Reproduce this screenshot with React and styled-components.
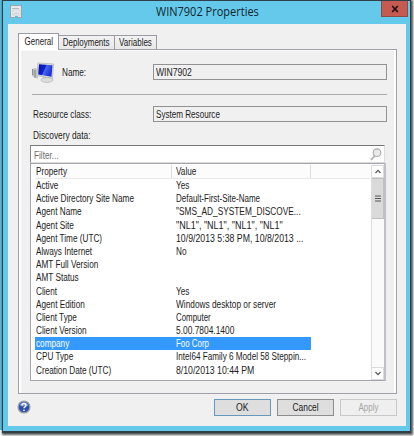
import React from 'react'
import styled, { createGlobalStyle, css } from 'styled-components'


const GlobalStyle = createGlobalStyle`
    * {
        box-sizing: border-box;
    }

    body {
        margin: 0;
        overflow: hidden;
        background: #fff;
        font-family: "Liberation Sans", Arial, sans-serif;
        font-size: 10px;
        color: #1c1c1c;
    }
`

// the dialog font is narrower than Arial
const Text = styled.span`
    display: inline-block;
    white-space: nowrap;
    transform: scaleX(${props => props.$narrow || 0.82});
    transform-origin: ${props => props.$center ? 'center' : 'left'};
`

const Desktop = styled.div`
    width: 414px;
    height: 436px;
    padding-left: 2px;
    background: linear-gradient(to right, #57bfe4 2px, #fff 2px) no-repeat 0 0 / 100% 430px;
`

const Window = styled.div`
    width: 409px;
    height: 433px;
    display: flex;
    flex-direction: column;
    padding: 0 4px 5px 5px;
    border: solid #2f3f48;
    border-width: 1px 1px 2px 1px;
    background: #64c9ea;
    box-shadow: 1px 1px 2px 1px #555;
`

const TitleBar = styled.div`
    height: 23px;
    display: flex;
    flex-shrink: 0;
`

const TitleIcon = styled.svg`
    width: 12px;
    height: 13px;
    margin: 4px 0 0 2px;
`

const Title = styled.div`
    flex: 1;
    padding-left: 134px;
    font-family: "Open Sans", "Noto Sans", sans-serif;
    font-size: 12.3px;
    line-height: 22px;
    color: #10242c;
    white-space: nowrap;
`

const CloseButton = styled.button`
    width: 27px;
    height: 16px;
    margin-right: -2px;
    padding: 0;
    display: flex;
    align-items: center;
    justify-content: center;
    border: 1px solid #8c4a48;
    border-top: 0;
    background: #c45a50;
`

const Client = styled.div`
    flex: 1;
    display: flex;
    flex-direction: column;
    padding: 9px 9px 0 10px;
    background: #f0f0f0;
`

const Tabs = styled.div`
    height: 16px;
    display: flex;
    align-items: flex-end;
    flex-shrink: 0;
`

const Tab = styled.div`
    width: ${props => props.$width}px;
    height: 14px;
    display: flex;
    justify-content: center;
    border: 1px solid #9a9ba3;
    border-bottom: 0;
    border-left-width: ${props => props.$joined ? 0 : 1}px;
    background: linear-gradient(#f2f2f2, #e8e8e8);
    line-height: 14px;

    ${props => props.$active && css`
        height: 17px;
        margin-bottom: -1px;
        z-index: 1;
        background: #fff;
        line-height: 15px;
    `}
`

const Panel = styled.div`
    height: 345px;
    display: flex;
    flex-direction: column;
    flex-shrink: 0;
    padding: 14px 8px 0 9px;
    border: 1px solid #9fa0a8;
    box-shadow: inset 2px 0 #fff, inset -2px 0 #fff, inset 0 1px #fafafa;
`

const FormRow = styled.div`
    height: 16px;
    display: flex;
    align-items: center;
    flex-shrink: 0;
    padding: 0 1px 0 4px;
`

const ComputerIcon = styled.svg`
    width: 23px;
    height: 22px;
    flex-shrink: 0;
`

const Label = styled.label`
    width: ${props => props.$width}px;
    padding-left: ${props => props.$indent || 0}px;
`

const Field = styled.div`
    flex: 1;
    height: 16px;
    padding-left: 2px;
    border: 1px solid #929292;
    line-height: 15px;
`

const Separator = styled.div`
    height: 1px;
    flex-shrink: 0;
    margin: 14px 1px 11px 4px;
    background: #aaa;
`

const DiscoveryLabel = styled.div`
    height: 23px;
    flex-shrink: 0;
    padding: 8px 0 0 4.5px;
    line-height: 12px;
`

const Filter = styled.div`
    height: 18px;
    display: flex;
    align-items: center;
    justify-content: space-between;
    flex-shrink: 0;
    margin: 0 3px 0 2px;
    padding: 2px 2px 0 3px;
    border: 1px solid #ddd;
    border-top: 1px solid #777;
    border-left-color: #888;
    background: #fff;
    color: #6c6c6c;
`

const FilterIcon = styled.svg`
    width: 12px;
    height: 13px;
    margin-top: -2px;
`

const ListBox = styled.div`
    height: 218px;
    display: flex;
    flex-shrink: 0;
    margin: 0 2px 0 2px;
    padding-top: 1px;
    border: 1px solid #a3a4ac;
    border-right: 2px solid #bfc0c8;
    background: #fff;
`

const Columns = styled.div`
    width: 340px;
    padding: 0 0 0 4px;
`

const ListHeader = styled.div`
    width: 335px;
    height: 14px;
    display: flex;
    border-bottom: 1px solid #e9e9e9;
    background: #fcfcfc;
    line-height: 14px;
`

const HeaderCell = styled.div`
    width: ${props => props.$width}px;
    padding-left: ${props => props.$indent}px;
    border-right: 1px solid #dedede;
`

const Row = styled.div`
    width: 276px;
    height: 13.2px;
    display: flex;
    line-height: 13.2px;
    white-space: nowrap;

    ${props => props.$selected && css`
        background: #3399ff;
        color: #fff;
    `}
`

const Cell = styled.div`
    width: ${props => props.$width}px;
    padding-left: 1px;
`

const Scrollbar = styled.div`
    width: 13px;
    display: flex;
    flex-direction: column;
    justify-content: space-between;
    border-left: 1px solid #dcdcdc;
    background: #fafafa;
`

const ScrollButton = styled.div`
    height: 13px;
    display: flex;
    align-items: center;
    justify-content: center;
    border: 1px solid #dadada;
    border-left: 0;
    background: #fff;
`

const Thumb = styled.div`
    height: 41px;
    margin-bottom: auto;
    display: flex;
    align-items: center;
    justify-content: center;
    border: 1px solid #c0c0c0;
    border-left: 0;
    background: #dadada;
`

const Footer = styled.div`
    display: flex;
    align-items: flex-start;
    gap: 6px;
    padding-top: 5px;
`

const HelpIcon = styled.svg`
    width: 14px;
    height: 14px;
    margin: 1px auto 0 -1px;
`

const Button = styled.button`
    width: 57px;
    height: 17px;
    padding: 0;
    border: 1px solid #8d8d8d;
    background: #dedede;
    color: #1c1c1c;
    font: inherit;
    line-height: 15px;

    ${props => props.$primary && css`
        border-color: #6499bd;
    `}

    &:disabled {
        border-color: #c9c9c9;
        background: #efefef;
        color: #a5a5a5;
    }
`


// name, value, width factor of the value
const discoveryData = [
    ['Active', 'Yes'],
    ['Active Directory Site Name', 'Default-First-Site-Name', 0.8],
    ['Agent Name', '"SMS_AD_SYSTEM_DISCOVE...', 0.83],
    ['Agent Site', '"NL1", "NL1", "NL1", "NL1"', 0.9],
    ['Agent Time (UTC)', '10/9/2013 5:38 PM, 10/8/2013 ...', 0.875],
    ['Always Internet', 'No'],
    ['AMT Full Version', ''],
    ['AMT Status', ''],
    ['Client', 'Yes'],
    ['Agent Edition', 'Windows desktop or server', 0.83],
    ['Client Type', 'Computer', 0.79],
    ['Client Version', '5.00.7804.1400', 0.84],
    ['company', 'Foo Corp', 0.79],
    ['CPU Type', 'Intel64 Family 6 Model 58 Steppin...', 0.815],
    ['Creation Date (UTC)', '8/10/2013 10:44 PM', 0.87],
]


const Computer = () => (
    <ComputerIcon viewBox="0 0 23 22">
        <defs>
            <linearGradient id="screen" x1="0" y1="0" x2="1" y2="0.4">
                <stop offset="0" stopColor="#0712a5" />
                <stop offset="0.5" stopColor="#1020cf" />
                <stop offset="0.55" stopColor="#4966ed" />
                <stop offset="1" stopColor="#1b32d5" />
            </linearGradient>
        </defs>
        <path d="M0 8l3-1 3 1v10l-4-2-2-1z" fill="#c3c5c5" />
        <path d="M0.700 8v6M3 9v8" stroke="#777d7f" strokeWidth="0.900" />
        <path d="M6 2l15.500 1-1 14.500-15.700-3z" fill="#dcdedb" stroke="#aeb1ad" strokeWidth="0.7" />
        <path d="M7 3.300l13.500 1-1 11.400-13.300-2.200z" fill="url(#screen)" />
        <path d="M11 16l5 1v3h-5z" fill="#b9bcba" />
        <ellipse cx="15" cy="19" rx="6" ry="2.400" fill="#dedfdd" stroke="#b0b2b1" strokeWidth="0.7" />
    </ComputerIcon>
)

const Help = () => (
    <HelpIcon viewBox="0 0 14 14">
        <circle cx="7" cy="7" r="5.900" fill="#2d4fae" stroke="#9c9fa5" strokeWidth="1.300" />
        <path d="M2.500 5.500a4.700 4.700 0 0 1 9 0q-4.500 2-9 0z" fill="#6f91d8" />
        <path d="M5 5.500q0-2 2-2t2 1.800q0 1-1 1.500T7 8.300" fill="none" stroke="#fff" strokeWidth="1.400" />
        <circle cx="7" cy="10.300" r="0.900" fill="#fff" />
    </HelpIcon>
)


export default function App() {
    return (
        <Desktop>
            <GlobalStyle />
            <Window>
                <TitleBar>
                    <TitleIcon viewBox="0 0 12 13">
                        <rect x="0.500" y="0.500" width="11" height="12" fill="#e6e9eb" stroke="#98a7ae" />
                        <path d="M2 3.500h7" stroke="#b0babf" />
                        <path d="M3 5h7v5H3z" fill="#f8f8f8" stroke="#c0c6c9" strokeWidth="0.700" />
                        <path d="M4 7h5M4 8.500h5" stroke="#bbc2c6" strokeWidth="0.700" />
                        <path d="M5 11.500h3" stroke="#4fc5e9" />
                    </TitleIcon>
                    <Title><Text $narrow={0.895}>WIN7902 Properties</Text></Title>
                    <CloseButton>
                        <svg width="8" height="8" viewBox="0 0 8 8">
                            <path d="M1.200 1l5.600 6M6.800 1L1.200 7" stroke="#201010" strokeWidth="1.700" />
                        </svg>
                    </CloseButton>
                </TitleBar>
                <Client>
                    <Tabs>
                        <Tab $width={41} $active><Text $center $narrow={0.8}>General</Text></Tab>
                        <Tab $width={56} $joined><Text $center $narrow={0.8}>Deployments</Text></Tab>
                        <Tab $width={42} $joined><Text $center $narrow={0.8}>Variables</Text></Tab>
                    </Tabs>
                    <Panel>
                        <FormRow>
                            <Computer />
                            <Label $width={98} $indent={7}><Text>Name:</Text></Label>
                            <Field><Text $narrow={0.86}>WIN7902</Text></Field>
                        </FormRow>
                        <Separator />
                        <FormRow>
                            <Label $width={121} $indent={1}><Text>Resource class:</Text></Label>
                            <Field><Text $narrow={0.81}>System Resource</Text></Field>
                        </FormRow>
                        <DiscoveryLabel><Text $narrow={0.835}>Discovery data:</Text></DiscoveryLabel>
                        <Filter>
                            <Text>Filter...</Text>
                            <FilterIcon viewBox="0 0 12 13">
                                <path d="M5 7.500L1 12" stroke="#b0b0b0" strokeWidth="1.800" />
                                <circle cx="7" cy="4.700" r="3.800" fill="#e9e9e9" stroke="#aaa" strokeWidth="1.100" />
                            </FilterIcon>
                        </Filter>
                        <ListBox>
                            <Columns>
                                <ListHeader>
                                    <HeaderCell $width={137} $indent={1}><Text>Property</Text></HeaderCell>
                                    <HeaderCell $width={139} $indent={4}><Text>Value</Text></HeaderCell>
                                </ListHeader>
                                {discoveryData.map(([name, value, narrow]) => (
                                    <Row key={name} $selected={name === 'company'}>
                                        <Cell $width={140}><Text>{name}</Text></Cell>
                                        <Cell $width={136}><Text $narrow={narrow}>{value}</Text></Cell>
                                    </Row>
                                ))}
                            </Columns>
                            <Scrollbar>
                                <ScrollButton>
                                    <svg width="6" height="5" viewBox="0 0 6 5">
                                        <path d="M0.500 4L3 1.300 5.500 4" fill="none" stroke="#555" strokeWidth="1.200" />
                                    </svg>
                                </ScrollButton>
                                <Thumb>
                                    <svg width="6" height="7" viewBox="0 0 6 7">
                                        <path d="M0 1h6M0 3.500h6M0 6h6" stroke="#555" />
                                    </svg>
                                </Thumb>
                                <ScrollButton>
                                    <svg width="6" height="5" viewBox="0 0 6 5">
                                        <path d="M0.500 1L3 3.700 5.500 1" fill="none" stroke="#555" strokeWidth="1.200" />
                                    </svg>
                                </ScrollButton>
                            </Scrollbar>
                        </ListBox>
                    </Panel>
                    <Footer>
                        <Help />
                        <Button $primary><Text $center $narrow={0.87}>OK</Text></Button>
                        <Button><Text $center $narrow={0.84}>Cancel</Text></Button>
                        <Button disabled><Text $center $narrow={0.8}>Apply</Text></Button>
                    </Footer>
                </Client>
            </Window>
        </Desktop>
    )
}
